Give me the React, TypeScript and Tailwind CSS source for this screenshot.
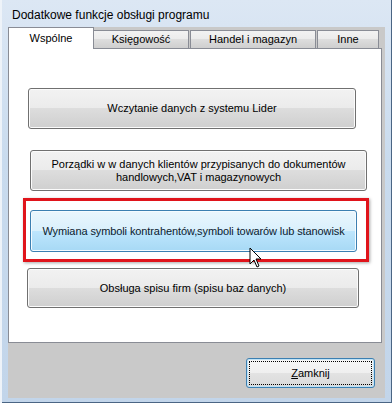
import React from "react";

const grayBtn =
  "flex items-center justify-center rounded-[3px] border border-[#707070] bg-[linear-gradient(to_bottom,#f2f2f2_0%,#ebebeb_50%,#dddddd_50%,#cfcfcf_100%)] shadow-[inset_0_0_0_1px_#fbfbfb] text-[11px] leading-[13px] text-black text-center";

const blueBtn =
  "flex items-center justify-center rounded-[3px] border border-[#3c7fb1] bg-[linear-gradient(to_bottom,#eaf6fd_0%,#d9f0fc_50%,#bee6fd_50%,#a7d9f5_100%)] shadow-[inset_0_0_0_1px_#f4fbff] text-[11px] leading-[13px] tracking-[-0.1px] text-[#0b1a2e] text-center";

const tab =
  "flex items-center justify-center h-[18px] border border-b-0 border-[#898c95] bg-[linear-gradient(to_bottom,#f2f2f2_0%,#ebebeb_50%,#dddddd_50%,#cfcfcf_100%)] text-[11px] text-black";

const Cursor = () => (
  <svg
    className="absolute left-[249px] top-[247px]"
    width="14"
    height="22"
    viewBox="0 0 14 22"
  >
    <path
      d="M1 1 L1 17 L5 13 L8 20 L10 19 L7 12 L12 12 Z"
      fill="#ffffff"
      stroke="#000000"
      strokeWidth="1"
      strokeLinejoin="miter"
    />
  </svg>
);

export default function App() {
  return (
    <div className="relative w-[392px] h-[406px] bg-white overflow-hidden font-['Liberation_Sans',Arial,sans-serif]">
      <div className="flex h-[403px]">
        <div className="w-[2px] bg-[#eef3f9]" />
        {/* window frame */}
        <div className="flex-1 flex flex-col pl-[6px] pr-[3px] border-r border-b border-[#4a6584] bg-[linear-gradient(to_bottom,#dce7f4_0%,#c9dbee_40%,#c2d5ea_100%)]">
          <div className="h-[27px] flex items-center pl-[4px] pt-[2px] text-[12px] text-black">
            Dodatkowe funkcje obsługi programu
          </div>

          {/* client area */}
          <div className="flex flex-col w-[377px] h-[371px] bg-[#c9c9c9]">
            {/* tab strip */}
            <div className="flex items-end h-[21px] relative z-10">
              <div className="flex items-center justify-center w-[86px] h-[22px] -mb-[1px] border border-b-0 border-[#898c95] bg-white text-[11px] text-black">
                Wspólne
              </div>
              <div className={`${tab} w-[96px] -ml-[1px]`}>Księgowość</div>
              <div className={`${tab} w-[126px] ml-[1px]`}>Handel i magazyn</div>
              <div className={`${tab} w-[62px] ml-[1px]`}>Inne</div>
            </div>

            {/* tab panel */}
            <div className="flex flex-col w-[374px] h-[295px] border border-[#898c95] bg-white pt-[39px]">
              <div className={`${grayBtn} ml-[19px] w-[328px] h-[41px]`}>
                Wczytanie danych z systemu Lider
              </div>
              <div className={`${grayBtn} ml-[21px] mt-[21px] w-[337px] h-[41px]`}>
                Porządki w w danych klientów przypisanych do dokumentów
                <br />
                handlowych,VAT i magazynowych
              </div>
              <div className="ml-[14px] mt-[7px] w-[346px] h-[64px] border-[3px] border-[#e0141b] pl-[4px] pt-[9px] shadow-[1px_1px_3px_rgba(0,0,0,0.35)]">
                <div className={`${blueBtn} w-[327px] h-[42px]`}>
                  Wymiana symboli kontrahentów,symboli towarów lub stanowisk
                </div>
              </div>
              <div className={`${grayBtn} ml-[18px] mt-[6px] w-[332px] h-[40px]`}>
                Obsługa spisu firm (spisu baz danych)
              </div>
            </div>

            {/* bottom bar */}
            <div className="flex flex-1 pl-[238px] pt-[15px]">
              <div className="w-[129px] h-[30px] rounded-[3px] border border-[#3c7fb1] bg-[linear-gradient(to_bottom,#f6f6f6_0%,#efefef_50%,#e3e3e3_50%,#dadada_100%)] p-[2px] shadow-[inset_0_0_0_1px_#bfe3f7]">
                <div className="flex h-full items-center justify-center border border-dotted border-black text-[11px] text-black">
                  <span>
                    <span className="underline">Z</span>amknij
                  </span>
                </div>
              </div>
            </div>
          </div>
        </div>
      </div>
      <Cursor />
    </div>
  );
}
